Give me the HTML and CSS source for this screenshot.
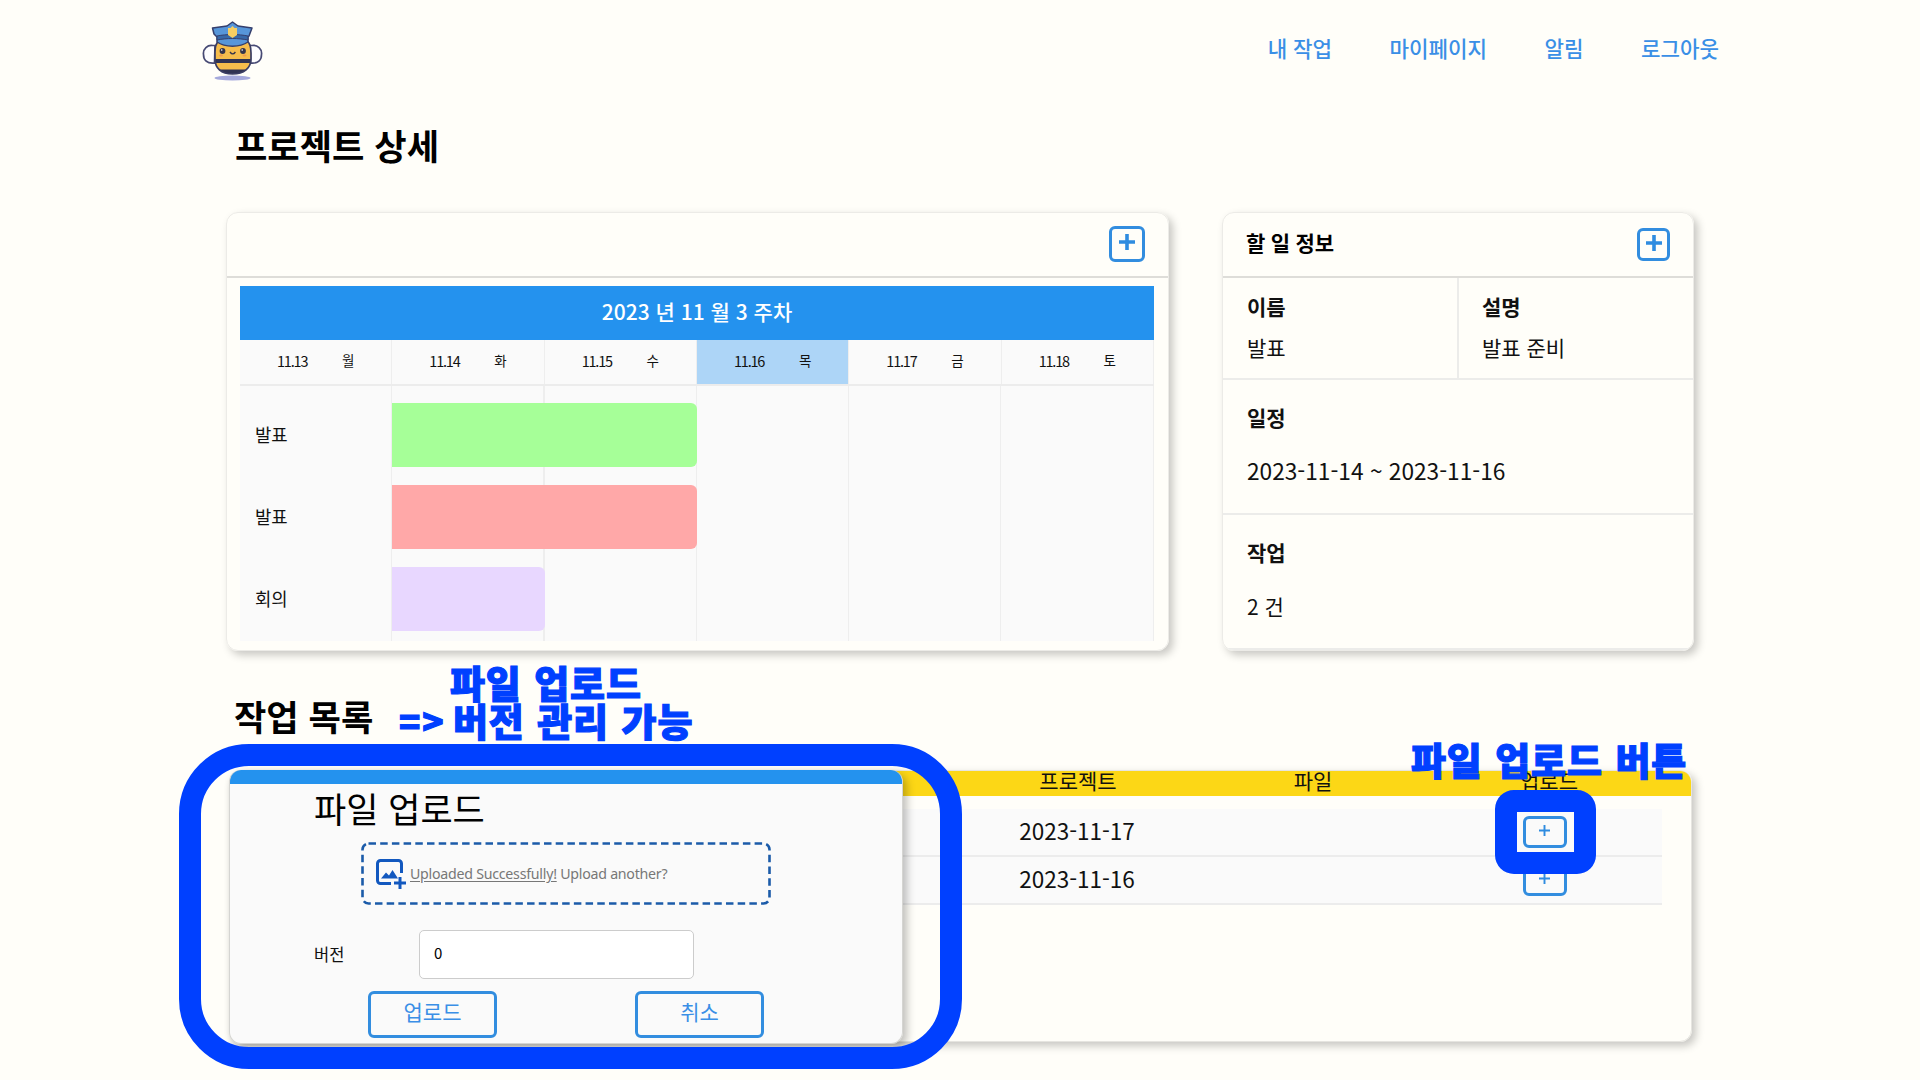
FILE: index.html
```html
<!DOCTYPE html>
<html lang="ko">
<head>
<meta charset="utf-8">
<title>프로젝트 상세</title>
<link rel="stylesheet" href="styles.css">
</head>
<body>
<header class="topbar">
  <svg class="logo" viewBox="0 0 62 62" width="62" height="62">
    <ellipse cx="30.500" cy="57" rx="18" ry="2.500" fill="#a5a9dc"/>
    <g fill="#fdfdff" stroke="#474a74" stroke-width="1.700">
      <path d="M13 24.500h-2a8 8 0 0 0-9.500 9c0 6 4 8.700 9 8.700h2z"/>
      <path d="M48 24.500h2a8 8 0 0 1 9.500 9c0 6-4 8.700-9 8.700h-2z"/>
    </g>
    <clipPath id="body-clip"><path d="M17 20h28c3 2 4 6 4 12v6c0 9-7 15-18.500 15S13 47 13 38v-7c0-6 1-9 4-11z"/></clipPath>
    <g clip-path="url(#body-clip)">
      <path fill="#f6bd4c" d="M10 15h42v40H10z"/>
      <path fill="#303352" d="M10 38h42v4H10zM10 48.500h42V56H10z"/>
    </g>
    <path d="M17 20h28c3 2 4 6 4 12v6c0 9-7 15-18.500 15S13 47 13 38v-7c0-6 1-9 4-11z" fill="none" stroke="#3a3d63" stroke-width="1.700"/>
    <path d="M30.500 1l5.500 4 14 2-3 8-1 1v5c-8 5.500-23 5.500-31 0v-5l-3-3-1.500-6L25 5z" fill="#5796d9" stroke="#353f6d" stroke-width="1.500" stroke-linejoin="round"/>
    <path d="M15 15c10-2 21-2 31 0v4c-10-2-21-2-31 0z" fill="#3768a8" stroke="#353f6d"/>
    <path d="M30.500 5l2 2h2.500v7l-4.500 3-4.500-3V7h2.500z" fill="#f7ce61"/>
    <circle cx="20.500" cy="30" r="2.900" fill="#34344b"/><circle cx="41" cy="30" r="2.900" fill="#34344b"/>
    <circle cx="19.700" cy="29" r=".8" fill="#fff"/><circle cx="40.200" cy="29" r=".8" fill="#fff"/>
    <path d="M28 31q2.700 3.800 5.400 0" fill="none" stroke="#34344b" stroke-width="1.300"/>
    <ellipse cx="19" cy="34.500" rx="2" ry="1" fill="#f1994f"/><ellipse cx="42.500" cy="34.500" rx="2" ry="1" fill="#f1994f"/>
  </svg>
  <nav class="nav"><a>내 작업</a><a>마이페이지</a><a>알림</a><a>로그아웃</a></nav>
</header>

<main class="page">
  <h1 class="heading">프로젝트 상세</h1>
  <div class="cards">
    <section class="card">
      <div class="card-head chart-head"><button class="plus plus-large"><svg viewBox="0 0 16 16" width="16" height="16"><path d="M8 0v16M0 8h16"/></svg></button></div>
      <div class="gantt">
        <div class="gantt-title">2023 년 11 월 3 주차</div>
        <div class="days">
          <div class="day"><span>11.13</span><span>월</span></div>
          <div class="day"><span>11.14</span><span>화</span></div>
          <div class="day"><span>11.15</span><span>수</span></div>
          <div class="day today"><span>11.16</span><span>목</span></div>
          <div class="day"><span>11.17</span><span>금</span></div>
          <div class="day"><span>11.18</span><span>토</span></div>
        </div>
        <div class="tasks">
          <div class="task"><span class="task-name">발표</span><i class="bar green"></i></div>
          <div class="task"><span class="task-name">발표</span><i class="bar red"></i></div>
          <div class="task"><span class="task-name">회의</span><i class="bar purple"></i></div>
        </div>
      </div>
    </section>
    <section class="card">
      <div class="card-head info-head"><h2>할 일 정보</h2><button class="plus"><svg viewBox="0 0 16 16" width="16" height="16"><path d="M8 0v16M0 8h16"/></svg></button></div>
      <div class="info-pair">
        <div class="info-cell"><b>이름</b><span>발표</span></div>
        <div class="info-cell"><b>설명</b><span>발표 준비</span></div>
      </div>
      <div class="info-row"><b>일정</b><span class="period">2023-11-14 ~ 2023-11-16</span></div>
      <div class="info-row"><b>작업</b><span>2 건</span></div>
    </section>
  </div>

  <h1 class="heading list-heading">작업 목록</h1>
  <section class="list">
    <div class="list-head"><span></span><span>프로젝트</span><span>파일</span><span>업로드</span></div>
    <div class="list-body">
      <div class="list-row"><span></span><span>2023-11-17</span><span></span><button class="plus plus-wide"><svg viewBox="0 0 16 16" width="11" height="11"><path d="M8 0v16M0 8h16"/></svg></button></div>
      <div class="list-row"><span></span><span>2023-11-16</span><span></span><button class="plus plus-wide"><svg viewBox="0 0 16 16" width="11" height="11"><path d="M8 0v16M0 8h16"/></svg></button></div>
    </div>
  </section>
</main>

<form class="modal">
  <h2 class="modal-title">파일 업로드</h2>
  <div class="dropzone">
    <svg class="dash" width="410" height="63"><rect x="1.500" y="1.500" width="407" height="60" rx="6"/></svg>
    <svg viewBox="0 0 31 31" width="31" height="31" fill="none" stroke="#1258bf" stroke-width="3">
      <path d="M15 24.500H4.500a3 3 0 0 1-3-3v-17a3 3 0 0 1 3-3h18a3 3 0 0 1 3 3V14"/>
      <path d="M24 18v12M18 24h12"/>
      <path d="M5 19.500l5-6 3 3 3.500-5.500 5.500 8.500z" fill="#1258bf" stroke="none"/>
    </svg>
    <p><u>Uploaded Successfully!</u> Upload another?</p>
  </div>
  <div class="field"><label for="version">버전</label><input id="version" value="0"></div>
  <div class="actions"><button type="button">업로드</button><button type="button">취소</button></div>
</form>

<div class="frame frame-modal"></div>
<div class="frame frame-button"></div>
<div class="note note-modal"><p class="note-first">파일 업로드</p><p><span class="arrow">=&gt;</span>버전 관리 가능</p></div>
<div class="note note-button"><p>파일 업로드 버튼</p></div>
</body>
</html>
```

FILE: styles.css
```css
* { box-sizing: border-box; margin: 0; padding: 0; }

body {
  width: 1920px;
  height: 1080px;
  overflow: hidden;
  position: relative;
  background: #fffef9;
  color: #111;
  font-family: "Noto Sans CJK KR", sans-serif;
}

button { background: none; font-family: inherit; }

.topbar {
  height: 102px;
  padding: 21px 201px 0 202px;
  display: flex;
  justify-content: space-between;
  align-items: flex-start;
}
.nav { display: flex; gap: 57.500px; padding-top: 12px; }
.nav a { color: #3a8fe6; font-size: 21.200px; font-weight: 500; line-height: 30px; }

.page { padding: 0 226px; }
.heading {
  height: 110px;
  padding: 21px 0 0 9px;
  font-size: 35.200px;
  line-height: 44px;
  color: #000;
}
.list-heading { height: 119px; padding-top: 43px; padding-left: 8px; }

.cards { display: grid; grid-template-columns: 943px 471px; gap: 54px; }
.cards .card:last-child { margin-left: -1px; }
.card {
  height: 439px;
  border: 1px solid #ecebe7;
  border-radius: 12px;
  overflow: hidden;
  box-shadow: 4px 4px 9px rgba(0, 0, 0, .22);
}
.card-head {
  display: flex;
  justify-content: space-between;
  border-bottom: 2px solid #deddd9;
}
.chart-head { height: 65px; padding: 13px 23px 0 0; justify-content: flex-end; }
.info-head { height: 65px; padding: 15px 23px 0 23px; }
.info-head h2 { font-size: 21px; line-height: 28px; color: #000; letter-spacing: -.2px; }

.plus {
  width: 33px;
  height: 33px;
  border: 3px solid #328ddf;
  border-radius: 6px;
  display: flex;
  justify-content: center;
  padding-top: 4px;
}
.plus path { stroke: #2f8ce0; stroke-width: 3.600; }
.plus-large { width: 36px; height: 36px; padding-top: 5px; }
.plus-wide { width: 44px; height: 32px; padding-top: 6px; }
.plus-wide path { stroke-width: 2.800; }

.gantt { margin: 8px 14px 0 13px; background: #fafafa; }
.gantt-title {
  height: 54px;
  background: #2492ee;
  color: #fff;
  font-size: 21px;
  font-weight: 500;
  line-height: 50px;
  text-align: center;
}
.days {
  height: 46px;
  display: grid;
  grid-template-columns: repeat(6, 1fr);
  border-bottom: 2px solid #ececec;
}
.day {
  display: flex;
  justify-content: space-between;
  padding: 0 37px 0 37px;
  font-size: 13.500px;
  line-height: 41px;
  border-right: 1px solid #eee;
}
.day span:first-child { font-size: 14.500px; letter-spacing: -1.200px; }
.today { background: #add5f7; }
.tasks {
  height: 255px;
  padding-top: 17px;
  display: flex;
  flex-direction: column;
  gap: 18px;
  background: repeating-linear-gradient(to right, transparent 0 151.100px, #eee 151.100px 152.300px);
}
.task { height: 64px; display: grid; grid-template-columns: 152px 1fr; align-items: center; }
.task-name { padding: 0 0 3px 15px; font-size: 17.800px; line-height: 24px; }
.bar { height: 64px; border-radius: 0 6px 6px 0; }
.green { width: 305px; background: #a6ff98; }
.red { width: 305px; background: #ffa8a8; }
.purple { width: 153px; background: #e8d7ff; }

.info-pair { height: 102px; display: grid; grid-template-columns: 234px 1fr; border-bottom: 2px solid #ececea; }
.info-cell { padding: 13px 0 0 24px; }
.info-cell + .info-cell { padding-left: 23px; border-left: 2px solid #ececea; }
.info-cell b, .info-cell span, .info-row b, .info-row span { display: block; font-size: 21px; line-height: 30px; }
.info-cell span { margin-top: 11px; }
.info-row { height: 135px; padding: 22px 0 0 24px; border-bottom: 2px solid #ececea; }
.info-row span { margin-top: 24px; }
.info-row .period { font-size: 22.700px; }

.list {
  width: 1463px;
  height: 272px;
  margin-left: 3px;
  border: 1px solid #e6e5e0;
  border-radius: 12px;
  overflow: hidden;
  box-shadow: 4px 4px 9px rgba(0, 0, 0, .22);
}
.list-head {
  height: 25px;
  display: grid;
  grid-template-columns: 730px 236px 234px 238px;
  background: #fcd716;
  font-size: 21px;
  line-height: 19px;
  text-align: center;
}
.list-body { margin: 13px 29px 0 28px; }
.list-row {
  height: 48px;
  display: grid;
  grid-template-columns: 1fr 236px 232px 235px;
  justify-items: center;
  padding-top: 7px;
  background: #fafafa;
  border-bottom: 2px solid #ececec;
  font-size: 22.500px;
  line-height: 29px;
}

.modal {
  position: absolute;
  left: 229px;
  top: 770px;
  width: 674px;
  height: 274px;
  border: 1px solid #d5d5d2;
  border-top: 0;
  border-radius: 12px;
  background: linear-gradient(#2492ee 14px, #fafafa 14px);
  box-shadow: 4px 4px 9px rgba(0, 0, 0, .25);
}
.modal-title { padding: 16px 0 0 84px; font-size: 35px; line-height: 44px; font-weight: 400; color: #000; }
.dropzone {
  position: relative;
  width: 410px;
  height: 63px;
  margin: 12px 0 0 131px;
  padding: 17px 0 0 15px;
  display: flex;
  gap: 3px;
}
.dash { position: absolute; left: 0; top: 0; }
.dash rect { fill: none; stroke: #1b5ba9; stroke-width: 2.600; stroke-dasharray: 7.500 4.200; }
.dropzone p { font-family: "Noto Sans", sans-serif; font-size: 14.200px; letter-spacing: -.25px; line-height: 29px; color: #777; white-space: nowrap; }
.dropzone u { text-underline-offset: 2px; }
.field { display: flex; align-items: center; margin-top: 25px; padding-left: 84px; }
.field label { width: 105px; padding-bottom: 2px; font-size: 16.500px; }
.field input {
  width: 275px;
  height: 49px;
  border: 1px solid #ccc;
  border-radius: 5px;
  background: #fff;
  padding: 0 0 5px 14px;
  font: 15px "Noto Sans CJK KR", sans-serif;
}
.actions { display: flex; gap: 138px; margin-top: 12px; padding-left: 138px; }
.actions button {
  width: 129px;
  height: 47px;
  padding-bottom: 7px;
  border: 3px solid #328ddf;
  border-radius: 6px;
  color: #3a8fe6;
  font-size: 21px;
  line-height: 30px;
}

.frame { position: absolute; border: 22px solid #0040ff; }
.frame-modal { left: 179px; top: 744px; width: 783px; height: 325px; border-radius: 70px; }
.frame-button { left: 1495px; top: 790px; width: 101px; height: 84px; border-radius: 19px; }

.note {
  position: absolute;
  color: #0040ff;
  font-size: 38px;
  font-weight: 900;
  line-height: 38px;
  letter-spacing: .9px;
  word-spacing: 1px;
  white-space: nowrap;
  -webkit-text-stroke: 1.200px #0040ff;
}
.note-modal { left: 399px; top: 663px; }
.note-modal p { display: flex; }
.note-first { padding-left: 51px; }
.note-button { left: 1411px; top: 740px; }
.arrow { width: 54px; font-size: 35px; letter-spacing: 2px; }
```
